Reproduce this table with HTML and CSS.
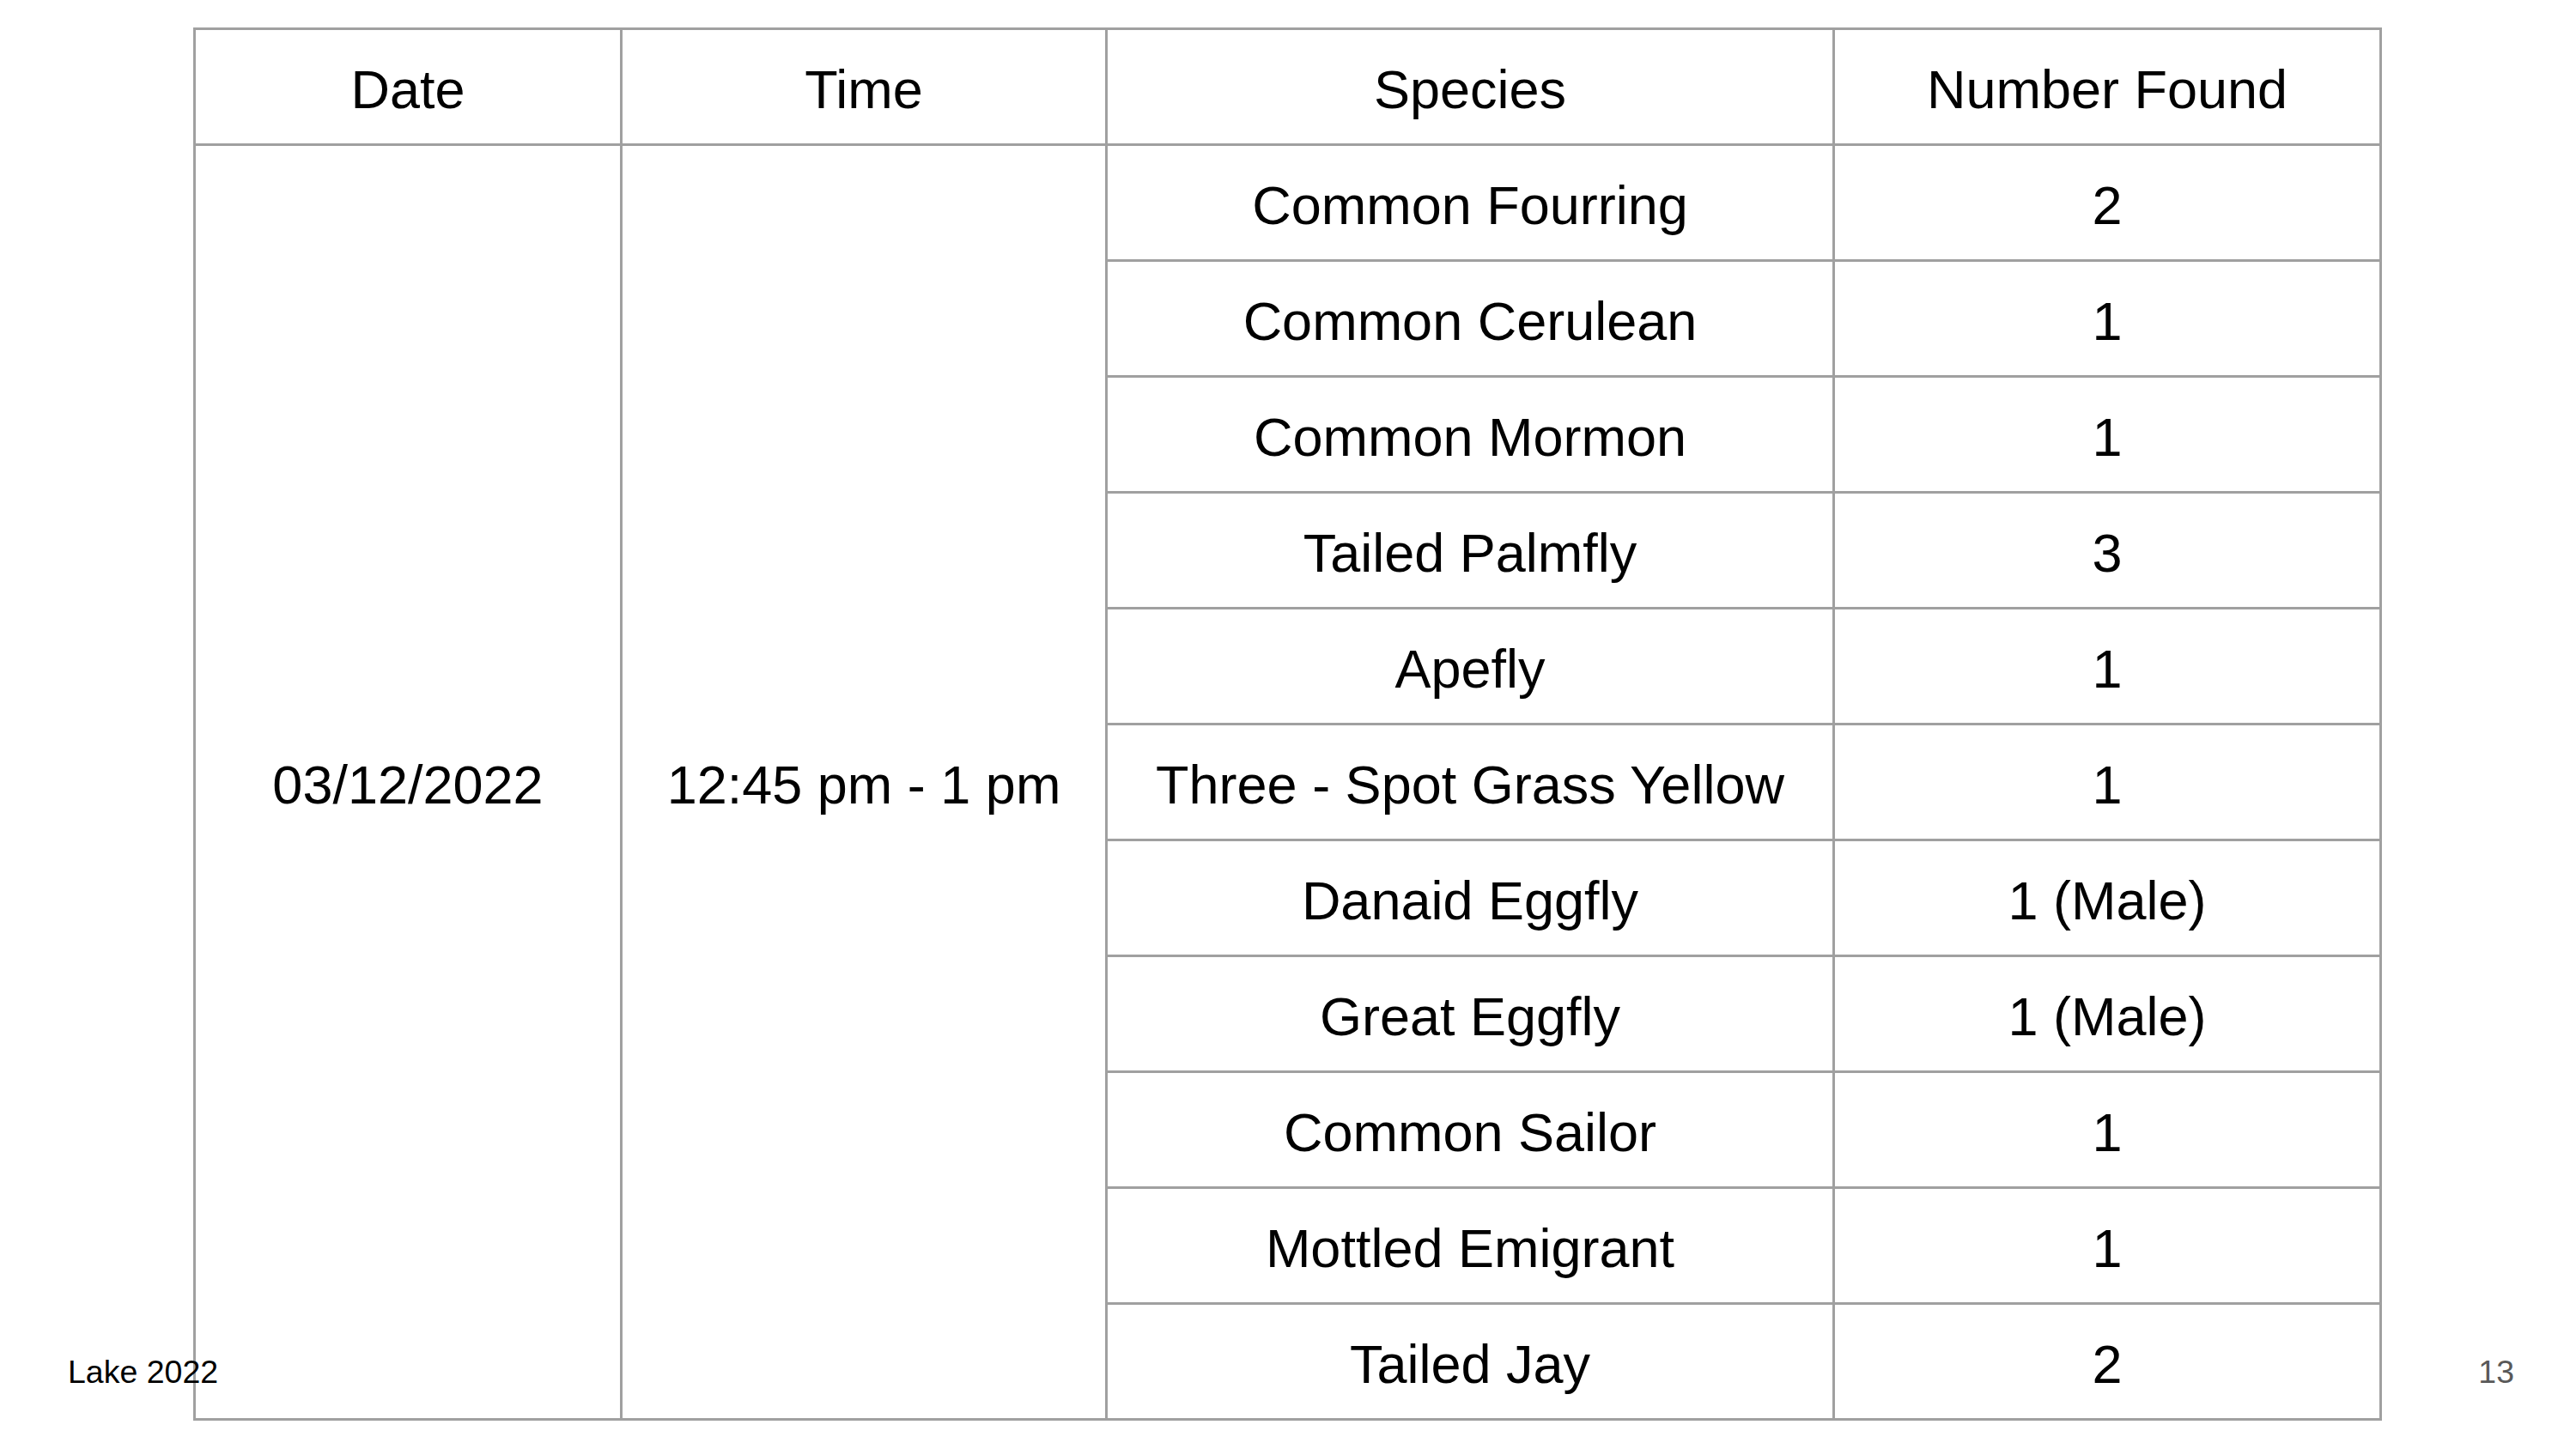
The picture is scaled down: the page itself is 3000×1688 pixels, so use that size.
FILE: index.html
```html
<!DOCTYPE html>
<html>
<head>
<meta charset="utf-8">
<link rel="stylesheet" href="styles.css">
</head>
<body>
<div class="slide">
  <table class="survey">
    <colgroup>
      <col class="c-date">
      <col class="c-time">
      <col class="c-species">
      <col class="c-num">
    </colgroup>
    <thead>
      <tr><th>Date</th><th>Time</th><th>Species</th><th>Number Found</th></tr>
    </thead>
    <tbody>
      <tr><td rowspan="11">03/12/2022</td><td rowspan="11">12:45 pm - 1 pm</td><td>Common Fourring</td><td>2</td></tr>
      <tr><td>Common Cerulean</td><td>1</td></tr>
      <tr><td>Common Mormon</td><td>1</td></tr>
      <tr><td>Tailed Palmfly</td><td>3</td></tr>
      <tr><td>Apefly</td><td>1</td></tr>
      <tr><td>Three - Spot Grass Yellow</td><td>1</td></tr>
      <tr><td>Danaid Eggfly</td><td>1 (Male)</td></tr>
      <tr><td>Great Eggfly</td><td>1 (Male)</td></tr>
      <tr><td>Common Sailor</td><td>1</td></tr>
      <tr><td>Mottled Emigrant</td><td>1</td></tr>
      <tr><td>Tailed Jay</td><td>2</td></tr>
    </tbody>
  </table>
  <div class="footer-left">Lake 2022</div>
  <div class="footer-right">13</div>
</div>
</body>
</html>
```
FILE: styles.css
```css
html, body {
  margin: 0;
  padding: 0;
  background: #ffffff;
}
body {
  font-family: "Liberation Sans", Arial, sans-serif;
  color: #000000;
}
.slide {
  position: relative;
  width: 3000px;
  height: 1688px;
  overflow: hidden;
  background: #ffffff;
  box-sizing: border-box;
  padding-top: 32px;
  padding-left: 225px;
}
.survey {
  border-collapse: collapse;
  table-layout: fixed;
  width: 2548px;
  font-size: 63px;
}
.c-date { width: 497px; }
.c-time { width: 565px; }
.c-species { width: 847px; }
.c-num { width: 637px; }
.survey th,
.survey td {
  border: 3px solid #a0a0a0;
  padding: 5px 0 0 0;
  text-align: center;
  vertical-align: middle;
  font-weight: normal;
  white-space: nowrap;
}
.survey tr {
  height: 135px;
}
.footer-left {
  position: absolute;
  left: 79px;
  top: 1577px;
  font-size: 37.5px;
  color: #000000;
}
.footer-right {
  position: absolute;
  right: 72px;
  top: 1577px;
  font-size: 37.5px;
  color: #595959;
}
```
